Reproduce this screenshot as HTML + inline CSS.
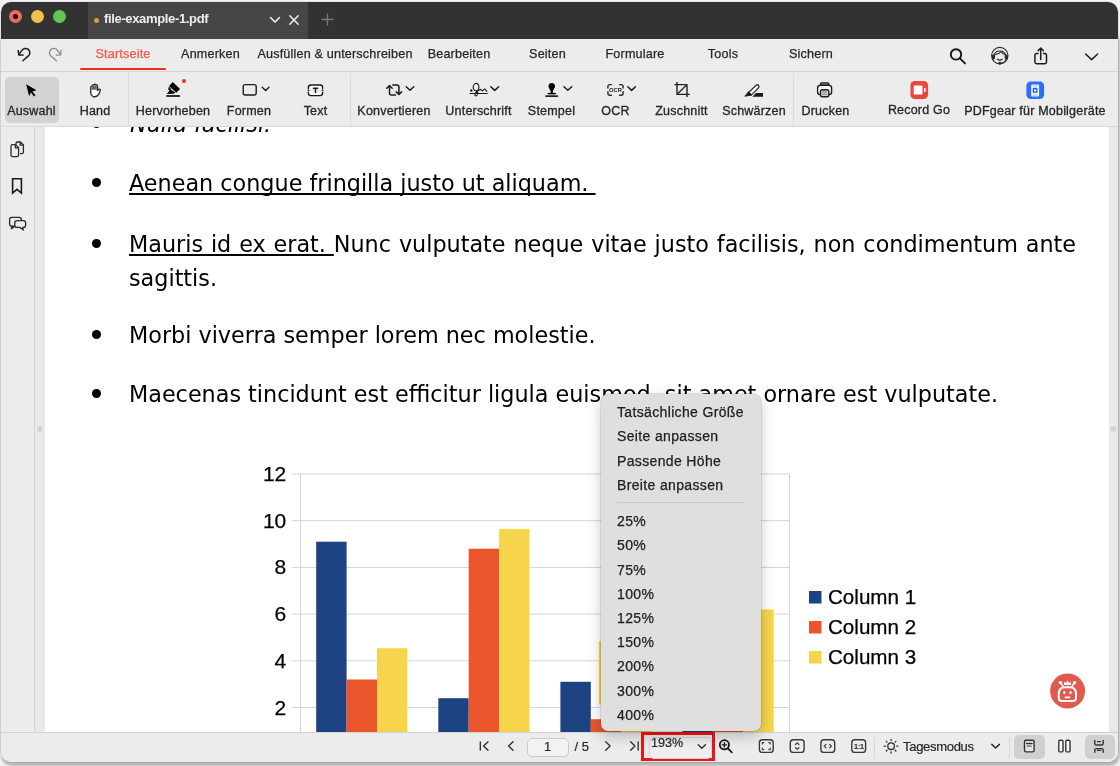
<!DOCTYPE html>
<html lang="de">
<head>
<meta charset="utf-8">
<title>file-example-1.pdf</title>
<style>
*{box-sizing:border-box;margin:0;padding:0}
html,body{width:1120px;height:766px;overflow:hidden}
body{background:#f3f3f3;font-family:"Liberation Sans",sans-serif;font-size:13px;color:#222;position:relative}
.abs{position:absolute}
#win{will-change:transform;position:absolute;left:1px;top:2px;width:1117px;height:760px;border-radius:10px;background:#ececec;overflow:hidden;box-shadow:0 0 0 .5px rgba(0,0,0,.13)}
#title{position:absolute;left:0;top:0;width:100%;height:37px;background:#323232}
#tab{position:absolute;left:87px;top:0;width:220px;height:37px;background:#464646}
.tl{position:absolute;top:8px;width:13px;height:13px;border-radius:50%}
#tabtxt{position:absolute;left:103px;top:9px;color:#ededed;font-weight:bold;font-size:13px;letter-spacing:-.35px;white-space:nowrap}
#menu{position:absolute;left:0;top:37px;width:100%;height:33px;background:#ececec;border-bottom:1px solid #d6d6d6}
.mi{position:absolute;top:8px;transform:translateX(-50%);white-space:nowrap;font-size:12.6px;letter-spacing:.18px;-webkit-text-stroke:.25px;color:#262626}
#tools{position:absolute;left:0;top:70px;width:100%;height:55px;background:#ececec;border-bottom:1px solid #d9d9d9}
.tb{position:absolute;top:31.8px;transform:translateX(-50%);white-space:nowrap;font-size:12.5px;letter-spacing:.2px;-webkit-text-stroke:.3px #262626;color:#262626}
.vs{position:absolute;top:1px;width:1px;height:54px;background:#dcdcdc}
svg{position:absolute;overflow:visible}
#side{position:absolute;left:0;top:125px;width:34px;height:605px;background:#ececec;border-right:1px solid #d4d4d4}
#doc{position:absolute;left:34px;top:125px;width:1083px;height:605px;background:#e9e9e9;overflow:hidden}
#page{position:absolute;left:10px;top:-10px;width:1064px;height:640px;background:#fff;font-family:"DejaVu Sans",sans-serif;font-size:22.3px;color:#000}
.ln{position:absolute;white-space:nowrap;line-height:26px;text-decoration-thickness:1.3px;text-underline-offset:2.2px;text-decoration-skip-ink:none}
.bul{position:absolute;width:9px;height:9px;border-radius:50%;background:#000;left:47px}
#bot{position:absolute;left:0;top:730px;width:100%;height:30px;background:#ececec;border-top:1px solid #d2d2d2}
#pop{position:absolute;left:600px;top:392px;width:160px;height:337px;border-radius:7px;background:#dfdfdf;box-shadow:0 0 0 .5px rgba(0,0,0,.18),0 5px 14px rgba(0,0,0,.22)}
.pi{position:absolute;left:16px;white-space:nowrap;font-size:14px;letter-spacing:.35px;-webkit-text-stroke:.25px;color:#202020;line-height:16px}
.bt{position:absolute;top:6px;white-space:nowrap;font-size:13px;-webkit-text-stroke:.2px;color:#262626}
.ax{font-family:"Liberation Sans",sans-serif;font-size:21px;fill:#000;stroke:#000;stroke-width:.25px}
</style>
</head>
<body>
<div class="abs" style="left:1.5px;top:30px;width:1116.5px;height:732px;border-radius:10px;box-shadow:.5px 3px 3px 1px rgba(0,0,0,.26)"></div>
<div id="win">
  <div id="title">
    <div id="tab"></div>
    <div class="tl" style="left:8px;background:#ec6a5e"></div>
    <div class="abs" style="left:12px;top:12px;width:5px;height:5px;border-radius:50%;background:#1a0000"></div>
    <div class="tl" style="left:30px;background:#f4bf4f"></div>
    <div class="tl" style="left:52px;background:#61c554"></div>
    <div class="abs" style="left:92.5px;top:16px;width:5px;height:5px;border-radius:50%;background:#e8953a"></div>
    <div id="tabtxt">file-example-1.pdf</div>
    <svg style="left:268px;top:14px" width="12" height="8" viewBox="0 0 12 8"><path d="M1.5 1.5 L6 6 L10.5 1.5" fill="none" stroke="#f0f0f0" stroke-width="1.6" stroke-linecap="round" stroke-linejoin="round"/></svg>
    <svg style="left:288px;top:13px" width="10" height="10" viewBox="0 0 10 10"><path d="M0.8 0.8 L9.2 9.2 M9.2 0.8 L0.8 9.2" fill="none" stroke="#f0f0f0" stroke-width="1.5" stroke-linecap="round"/></svg>
    <svg style="left:320px;top:11px" width="13" height="13" viewBox="0 0 13 13"><path d="M6.5 0.5 V12.5 M0.5 6.5 H12.5" fill="none" stroke="#7a7a7a" stroke-width="1.3"/></svg>
  </div>
  <div id="menu">
    <div class="mi" style="left:122px;color:#ee5a45">Startseite</div>
    <div class="abs" style="left:79px;top:29px;width:86px;height:2px;border-radius:1px;background:#e8321c"></div>
    <div class="mi" style="left:209.5px">Anmerken</div>
    <div class="mi" style="left:334px">Ausfüllen &amp; unterschreiben</div>
    <div class="mi" style="left:458px">Bearbeiten</div>
    <div class="mi" style="left:546.5px">Seiten</div>
    <div class="mi" style="left:634px">Formulare</div>
    <div class="mi" style="left:722px">Tools</div>
    <div class="mi" style="left:810px">Sichern</div>
  </div>
  <div id="tools">
    <div class="abs" style="left:3.5px;top:5px;width:54.5px;height:46px;border-radius:5px;background:#d2d2d2"></div>
    <div class="tb" style="left:30.5px">Auswahl</div>
    <div class="tb" style="left:94px">Hand</div>
    <div class="vs" style="left:127px"></div>
    <div class="tb" style="left:172px">Hervorheben</div>
    <div class="tb" style="left:248px">Formen</div>
    <div class="tb" style="left:314.5px">Text</div>
    <div class="vs" style="left:349px"></div>
    <div class="tb" style="left:393px">Konvertieren</div>
    <div class="tb" style="left:477.5px">Unterschrift</div>
    <div class="tb" style="left:550.5px">Stempel</div>
    <div class="tb" style="left:614.5px">OCR</div>
    <div class="tb" style="left:680.5px">Zuschnitt</div>
    <div class="tb" style="left:753px">Schwärzen</div>
    <div class="vs" style="left:792px"></div>
    <div class="tb" style="left:824.5px">Drucken</div>
    <div class="tb" style="left:918px;top:30.8px">Record Go</div>
    <div class="tb" style="left:1034px">PDFgear für Mobilgeräte</div>
  </div>
  <div id="side"></div>
  <div id="doc">
    <div id="page">
      <div class="bul" style="top:2px"></div>
      <div class="ln" style="left:85px;top:-6.3px;font-style:italic">Nulla facilisi.</div>
      <div class="bul" style="top:61.4px"></div>
      <div class="ln" style="left:84px;top:52.5px;text-decoration:underline">Aenean congue fringilla justo ut aliquam.&nbsp;</div>
      <div class="bul" style="top:122.2px"></div>
      <div class="ln" style="left:84px;top:114.3px;word-spacing:.8px"><span style="text-decoration:underline">Mauris id ex erat. </span>Nunc vulputate neque vitae justo facilisis, non condimentum ante</div>
      <div class="ln" style="left:84px;top:148px">sagittis.</div>
      <div class="bul" style="top:213.3px"></div>
      <div class="ln" style="left:84px;top:205px">Morbi viverra semper lorem nec molestie.</div>
      <div class="bul" style="top:272.2px"></div>
      <div class="ln" style="left:84px;top:264px">Maecenas tincidunt est efficitur ligula euismod, sit amet ornare est vulputate.</div>
    </div>
  </div>
<svg id="chart" style="left:-1px;top:-2px" width="1120" height="766" viewBox="0 0 1120 766">
<g stroke="#d4d4d4" stroke-width="1" fill="none">
<path d="M292 474.0 H789.5"/>
<path d="M292 520.7 H789.5"/>
<path d="M292 567.4 H789.5"/>
<path d="M292 614.1 H789.5"/>
<path d="M292 660.8 H789.5"/>
<path d="M292 707.5 H789.5"/>
<path d="M300.5 474 V740 M789.5 474 V740"/>
</g>
<rect x="316.2" y="541.7" width="30.4" height="198.3" fill="#1d4383"/>
<rect x="346.6" y="679.5" width="30.4" height="60.5" fill="#ea552c"/>
<rect x="377.0" y="648.2" width="30.4" height="91.8" fill="#f6d44c"/>
<rect x="438.3" y="698.2" width="30.4" height="41.8" fill="#1d4383"/>
<rect x="468.7" y="548.7" width="30.4" height="191.3" fill="#ea552c"/>
<rect x="499.1" y="528.9" width="30.4" height="211.1" fill="#f6d44c"/>
<rect x="560.4" y="681.8" width="30.4" height="58.2" fill="#1d4383"/>
<rect x="590.8" y="719.2" width="30.4" height="20.8" fill="#ea552c"/>
<rect x="621.2" y="667.8" width="30.4" height="72.2" fill="#f6d44c"/>
<rect x="682.5" y="653.8" width="30.4" height="86.2" fill="#1d4383"/>
<rect x="712.9" y="543.6" width="30.4" height="196.4" fill="#ea552c"/>
<rect x="743.3" y="609.4" width="30.4" height="130.6" fill="#f6d44c"/>
<rect x="598.8" y="641" width="2.4" height="63.5" fill="#f6d44c"/>
<g class="ax" text-anchor="end">
<text x="286.3" y="481.0">12</text>
<text x="286.3" y="527.7">10</text>
<text x="286.3" y="574.4">8</text>
<text x="286.3" y="621.1">6</text>
<text x="286.3" y="667.8">4</text>
<text x="286.3" y="714.5">2</text>
</g>
<rect x="809" y="591" width="12.5" height="12.5" fill="#1d4383"/>
<text class="ax" style="font-size:20.6px" x="828" y="604">Column 1</text>
<rect x="809" y="621" width="12.5" height="12.5" fill="#ea552c"/>
<text class="ax" style="font-size:20.6px" x="828" y="634">Column 2</text>
<rect x="809" y="651" width="12.5" height="12.5" fill="#f6d44c"/>
<text class="ax" style="font-size:20.6px" x="828" y="664">Column 3</text>
</svg>
<svg id="icons" style="left:-1px;top:-2px;pointer-events:none" width="1120" height="766" viewBox="0 0 1120 766" fill="none" stroke-linecap="round" stroke-linejoin="round">
<!-- undo / redo -->
<g stroke="#1c1c1c" stroke-width="1.5">
<path d="M22.9 60.7 L28.4 55.9 A4.3 4.3 0 1 0 21.9 50.4 L18.9 54.4"/>
<path d="M18.2 50.4 L18.7 54.9 L23 55.1"/>
</g>
<g stroke="#8a8a8a" stroke-width="1.3">
<path d="M56.4 60.7 L50.9 55.9 A4.3 4.3 0 1 1 57.4 50.4 L60.4 54.4"/>
<path d="M61.1 50.4 L60.6 54.9 L56.3 55.1"/>
</g>
<!-- menu right icons -->
<g stroke="#151515" stroke-width="1.9">
<circle cx="956" cy="54.4" r="5.2"/>
<path d="M959.9 58.4 L965 63.4"/>
</g>
<g stroke="#2a2a2a" stroke-width="1.1">
<circle cx="999.8" cy="55.6" r="8.2"/>
<path d="M993.6 56.5 A6.3 6.6 0 0 1 1006 56.5"/>
<path d="M994.6 54.8 Q998.5 54.6 1001.2 51.6 Q1002.8 54.4 1005.2 54.8"/>
<path d="M997.4 59.2 Q999.8 61 1002.2 59.2"/>
<rect x="992.4" y="55" width="2" height="4" rx="1" fill="#2a2a2a"/>
<rect x="1005.2" y="55" width="2" height="4" rx="1" fill="#2a2a2a"/>
<path d="M1006.2 59 Q1005.6 62.6 1000.6 63.2"/>
<circle cx="999.8" cy="63.2" r="1" fill="#2a2a2a"/>
</g>
<g stroke="#1c1c1c" stroke-width="1.5">
<path d="M1038 53.6 H1036.6 Q1034.9 53.6 1034.9 55.3 V62 Q1034.9 63.7 1036.6 63.7 H1044.8 Q1046.5 63.7 1046.5 62 V55.3 Q1046.5 53.6 1044.8 53.6 H1043.4"/>
<path d="M1040.7 59.4 V48.4 M1038 50.8 L1040.7 48.1 L1043.4 50.8"/>
<path d="M1085.6 54 L1091.6 59.6 L1097.6 54"/>
</g>
<!-- cursor -->
<path d="M26.2 84.3 L36.5 90.3 L32.4 91.4 L35.5 95.3 L34 96.5 L30.9 92.6 L29.1 96.2 Z" fill="#000" stroke="none"/>
<!-- hand -->
<g stroke="#2a2a2a" stroke-width="1.3">
<path d="M90.7 87.8 Q90.7 86.3 92 85.9 Q92.8 84.2 94.1 84.7 Q95.1 83.6 96.1 84.7 Q97.5 84.6 97.5 86.2 V90.6 L99 89.3 Q100.5 88.7 100.3 90.3 Q99.4 94.2 97.3 95.9 Q95 97.4 92.8 96.3 Q90.7 95.1 90.7 92.4 Z" fill="#fff"/>
<path d="M91.4 87.8 Q91.4 86.6 92.4 86.3 Q93.1 84.9 94.2 85.4 Q95.1 84.5 96 85.4 Q96.9 85.3 96.9 86.4 V89.8 H91.4 Z" fill="#666" stroke="none"/>
</g>
<!-- highlighter -->
<g fill="#000" stroke="none">
<path d="M172.8 82.1 L180 89 L176.3 92.8 L169.1 85.9 Z"/>
<path d="M168.9 86.6 L175.4 92.8 L173.4 93.8 L166.7 93.9 L169.5 90.7 L168.2 89.4 Z"/>
<rect x="166.3" y="95.2" width="13.6" height="1.6"/>
</g>
<path d="M170.8 89 L172.9 91.1" stroke="#ececec" stroke-width="1"/>
<circle cx="184" cy="81.1" r="2.1" fill="#ee3b2c"/>
<!-- formen -->
<g stroke="#1c1c1c" stroke-width="1.4">
<rect x="243.2" y="84.6" width="13" height="10.4" rx="2"/>
<path d="M262.2 87.2 L265.6 90.4 L269 87.2"/>
</g>
<!-- text -->
<g stroke="#1c1c1c" stroke-width="1.4">
<path d="M308.4 88.4 V87.6 Q308.4 85 311 85 H320 Q322.6 85 322.6 87.6 V88.4 M322.6 92.2 V93 Q322.6 95.6 320 95.6 H311 Q308.4 95.6 308.4 93 V92.2" fill="#fff"/>
<path d="M308.2 90.3 H308.8 M322.2 90.3 H322.8"/>
<path d="M313.4 88.3 H317.6 M315.5 88.3 V92.5" stroke-width="1.5"/>
</g>
<!-- konvertieren -->
<g stroke="#1c1c1c" stroke-width="1.5">
<path d="M395.4 95 H391.5 Q389.5 95 389.5 93 V86"/>
<path d="M386.8 88.2 L389.5 85.6 L392.2 88.2"/>
<path d="M392.8 85 H396.9 Q398.9 85 398.9 87 V94"/>
<path d="M396.2 91.9 L398.9 94.5 L401.6 91.9"/>
<path d="M406.2 86.8 L410 90.3 L413.8 86.8"/>
</g>
<!-- unterschrift -->
<g stroke="#1c1c1c" stroke-width="1.1">
<path d="M470 93.5 H487.2"/>
<circle cx="471.3" cy="90.6" r="0.7" fill="#1c1c1c"/>
<path d="M477.6 90.8 Q479.6 88.4 478.8 85.4 Q477.6 82.6 475.2 83.6 Q472.6 85.2 473.4 88.6 Q474.6 91.6 477.2 90.6 Q478.4 93 477.2 95 Q475.8 96.6 474.8 95.2 Q474.6 93.4 477 91.4 L480.6 89.2 L482.2 91 L484.8 88.8 L486.8 91.4"/>
<path d="M490.8 86.8 L494.7 90.4 L498.6 86.8" stroke-width="1.5"/>
</g>
<!-- stempel -->
<g fill="#000" stroke="none">
<path d="M551.75 82.9 C554.2 82.9 555.2 84.8 555 86.6 C554.8 88.4 553.2 89.8 552.8 91.4 L552.8 93 H550.7 L550.7 91.4 C550.3 89.8 548.7 88.4 548.5 86.6 C548.3 84.8 549.3 82.9 551.75 82.9 Z"/>
<rect x="547.6" y="92.9" width="8.4" height="1.1"/>
<rect x="548.2" y="94" width="7.2" height="1.4" fill="#9a9a9a"/>
<rect x="545.3" y="95.3" width="12.8" height="1.7" fill="#222"/>
</g>
<path d="M564 86.8 L567.8 90.3 L571.7 86.8" stroke="#1c1c1c" stroke-width="1.5"/>
<!-- OCR -->
<g stroke="#2a2a2a" stroke-width="1.4">
<path d="M607.9 88 V86.6 Q607.9 84.6 609.9 84.6 H611.4"/>
<path d="M619.6 84.6 H621.1 Q623.1 84.6 623.1 86.6 V88"/>
<path d="M623.1 91.8 V93.2 Q623.1 95.2 621.1 95.2 H619.6"/>
<path d="M611.4 95.2 H609.9 Q607.9 95.2 607.9 93.2 V91.8"/>
<path d="M627.8 86.8 L631.6 90.4 L635.4 86.8" stroke="#1c1c1c" stroke-width="1.5"/>
</g>
<text x="615.5" y="92" text-anchor="middle" font-family="Liberation Sans, sans-serif" font-weight="bold" font-size="5.8" fill="#222" stroke="none">OCR</text>
<!-- crop -->
<g stroke="#222" stroke-width="1.4" stroke-linecap="butt">
<path d="M677 81.9 V94.4 H689.7"/>
<path d="M674.4 84.6 H687 V97"/>
<path d="M677.6 93.8 L686.4 85.2" stroke-width="1.3"/>
</g>
<!-- schwaerzen -->
<g>
<path d="M748.8 92.2 L756.2 85.2 Q757.6 84 758.6 85.4 Q759.6 86.8 758.4 88 L751.2 95.2 Z" stroke="#2a2a2a" stroke-width="1.2" fill="#fff"/>
<path d="M748.6 92 L751.6 95 L745.2 96.2 Z" fill="#111" stroke="#111" stroke-width="0.8"/>
<path d="M756 93 H763 V96.8 H752.4 Z" fill="#1a1a1a" stroke="none"/>
</g>
<!-- drucken -->
<g stroke="#1c1c1c" stroke-width="1.4">
<rect x="817.6" y="85.4" width="14" height="9.2" rx="2.6" fill="#f8f8f8"/>
<path d="M820.4 85.2 V84.4 Q820.4 82.9 821.9 82.9 H827.4 Q828.9 82.9 828.9 84.4 V85.2 Z" fill="#888"/>
<rect x="820.5" y="89.8" width="8.3" height="6.9" rx="1.8" fill="#d8d8d8"/>
<path d="M822.6 92 H826.6 M822.6 94.2 H826.6" stroke="#777" stroke-width="1"/>
</g>
<!-- record go -->
<rect x="910.4" y="81" width="17.7" height="18" rx="4.4" fill="#e6493c" stroke="none"/>
<rect x="913.7" y="85.5" width="8.8" height="9.1" rx="1.2" fill="#fff" stroke="none"/>
<rect x="924" y="88" width="1.8" height="3.8" rx="0.5" fill="#fff" stroke="none"/>
<!-- pdfgear mobile -->
<rect x="1026.4" y="81.5" width="17.7" height="17.5" rx="4.2" fill="#2f6ef6" stroke="none"/>
<rect x="1031.2" y="84.4" width="7.9" height="12.1" rx="1.2" fill="#f4f8ff" stroke="none"/>
<rect x="1032.8" y="87.8" width="4.7" height="5" fill="#1f5bf0" stroke="none"/>
<circle cx="1035.2" cy="90.4" r="1.2" fill="#fff" stroke="none"/>
<path d="M1033 85.9 H1037.3 M1033 95 H1037.3" stroke="#9bbcfb" stroke-width="0.9"/>
<!-- sidebar -->
<g stroke="#2a2a2a" stroke-width="1.3">
<path d="M16 144.2 V143.6 Q16 142 17.6 142 H20.4 L23.4 145 V152 Q23.4 153.6 21.8 153.6 H20.6"/>
<path d="M20.2 142.2 V145.2 H23.2"/>
<path d="M11 146.2 Q11 144.6 12.6 144.6 H15.6 L18.6 147.6 V155 Q18.6 156.6 17 156.6 H12.6 Q11 156.6 11 155 Z" fill="#ececec"/>
<path d="M15.4 144.8 V147.8 H18.4"/>
</g>
<path d="M12.6 178.8 H21.4 V193 L17 189.4 L12.6 193 Z" stroke="#1c1c1c" stroke-width="1.6" stroke-linejoin="miter"/>
<g stroke="#2a2a2a" stroke-width="1.3">
<path d="M14 226.2 H11.8 Q9.6 226.2 9.6 224 V219.6 Q9.6 217.4 11.8 217.4 H19.2 Q21.4 217.4 21.4 219.6 V220.4"/>
<path d="M12.2 226.2 L11.4 228.8 L14.6 226.4"/>
<path d="M17 220.6 H23.4 Q25.6 220.6 25.6 222.8 V225.2 Q25.6 227.4 23.4 227.4 H22.6 L23.4 230 L19.8 227.4 H17 Q14.8 227.4 14.8 225.2 V222.8 Q14.8 220.6 17 220.6 Z" fill="#ececec"/>
</g>
<!-- splitter dots -->
<circle cx="40" cy="429" r="2.8" fill="#d2d2d2"/>
<circle cx="1113.5" cy="429" r="2.8" fill="#d2d2d2"/>
<!-- AI bot -->
<circle cx="1067.6" cy="691" r="17.5" fill="#e15a50"/>
<g stroke="#fff" stroke-width="2" fill="none">
<path d="M1058.8 694 Q1058.8 687.2 1065 687.2 H1070 Q1076 687.2 1076 694 V698 Q1076 700.9 1073 700.9 H1061.8 Q1058.8 700.9 1058.8 698 Z"/>
<path d="M1060.6 682.8 L1063 686.4 M1074.4 682.8 L1072 686.4" stroke-width="1.6"/>
</g>
<g fill="#fff" stroke="none">
<circle cx="1060.4" cy="682.6" r="1.7"/><circle cx="1074.6" cy="682.6" r="1.7"/>
<path d="M1063.8 685 L1064.6 681.4 L1066.2 683 L1067.5 680.2 L1068.8 683 L1070.4 681.4 L1071.2 685 Z"/>
<rect x="1063.4" y="691" width="2" height="3.2" rx="1"/><rect x="1069.5" y="691" width="2" height="3.2" rx="1"/>
<rect x="1064.6" y="696.6" width="5.8" height="1.6" rx="0.8"/>
</g>
</svg>
  <div id="bot">
    <div class="abs" style="left:526px;top:5px;width:42px;height:19px;border:1px solid #cbc8d0;border-radius:5px;background:#f2f2f2"></div>
    <div class="bt" style="left:543px">1</div>
    <div class="bt" style="left:573.5px">/ 5</div>
    <div class="abs" style="left:640px;top:-1px;width:74px;height:29px;border:3px solid #f01414"></div>
    <div class="abs" style="left:647.5px;top:4px;width:63px;height:22px;border:1px solid #d4d2d8;border-radius:5px;background:#efefef"></div>
    <div class="bt" style="left:650px;top:3px;font-size:12.6px">193%</div>
    <div class="bt" style="left:902px;letter-spacing:-.3px">Tagesmodus</div>
    <div class="abs" style="left:873px;top:4px;width:1px;height:22px;background:#d8d8d8"></div>
    <div class="abs" style="left:1007.5px;top:4px;width:1px;height:22px;background:#d8d8d8"></div>
    <div class="abs" style="left:1013px;top:2px;width:30.5px;height:24px;border-radius:5px;background:#d0d0d0"></div>
    <div class="abs" style="left:1083.5px;top:2px;width:30.5px;height:24px;border-radius:5px;background:#d0d0d0"></div>
  </div>
<svg id="bicons" style="left:-1px;top:-2px;pointer-events:none" width="1120" height="766" viewBox="0 0 1120 766" fill="none" stroke-linecap="round" stroke-linejoin="round">
<g stroke="#2a2a2a" stroke-width="1.3">
<path d="M480.3 741.8 V750.2 M488 741.8 L483.6 746 L488 750.2"/>
<path d="M513 741.8 L508.6 746 L513 750.2"/>
<path d="M605.7 741.8 L610.1 746 L605.7 750.2"/>
<path d="M630.6 741.8 L635 746 L630.6 750.2 M638.2 741.8 V750.2"/>
<path d="M698.2 744.8 L701.8 748.2 L705.4 744.8"/>
</g>
<g stroke="#1a1a1a" stroke-width="1.8">
<circle cx="724.4" cy="744.8" r="4.6"/>
<path d="M727.9 748.4 L731.8 752.4"/>
<path d="M722.2 744.8 H726.6 M724.4 742.6 V747" stroke-width="1.3"/>
</g>
<g stroke="#3a3a3a" stroke-width="1.4">
<rect x="759.4" y="739.8" width="13.8" height="12.6" rx="3"/>
<path d="M762.4 744 V742.6 H763.8 M768.8 742.6 H770.2 V744 M770.2 748.2 V749.6 H768.8 M763.8 749.6 H762.4 V748.2" stroke-width="1.2"/>
<rect x="790.3" y="739.8" width="13.8" height="12.6" rx="3"/>
<path d="M795.4 744.6 L797.2 742.8 L799 744.6 M795.4 747.6 L797.2 749.4 L799 747.6" stroke-width="1.2"/>
<rect x="820.9" y="739.8" width="13.8" height="12.6" rx="3"/>
<path d="M826 744.3 L824.2 746.1 L826 747.9 M829.6 744.3 L831.4 746.1 L829.6 747.9" stroke-width="1.2"/>
<rect x="851.8" y="739.8" width="13.8" height="12.6" rx="3"/>
</g>
<text x="858.7" y="749" text-anchor="middle" font-family="Liberation Sans, sans-serif" font-weight="bold" font-size="8" letter-spacing="-0.6" fill="#2a2a2a" stroke="none">1:1</text>
<g stroke="#2a2a2a" stroke-width="1.3">
<circle cx="891.1" cy="746.2" r="3.3"/>
<path d="M891.1 739.4 V740.4 M891.1 752 V753 M884.3 746.2 H885.3 M896.9 746.2 H897.9 M886.3 741.4 L887 742.1 M895.2 750.3 L895.9 751 M886.3 751 L887 750.3 M895.2 742.1 L895.9 741.4"/>
<path d="M991.8 744.4 L995.6 748 L999.4 744.4" stroke-width="1.5"/>
</g>
<g stroke="#333" stroke-width="1.4">
<rect x="1024.5" y="740.3" width="9.6" height="11.6" rx="1.6" fill="#e4e4e4"/>
<path d="M1026.6 743.4 H1032" stroke-width="1.5"/>
<path d="M1027.4 746.2 H1031.2" stroke="#666" stroke-width="1.2"/>
<rect x="1058.8" y="740.3" width="4.2" height="11.6" rx="1.2" fill="#fff"/>
<rect x="1065.8" y="740.3" width="4.2" height="11.6" rx="1.2" fill="#fff"/>
<path d="M1094.8 740.4 V743.4 Q1094.8 745 1096.4 745 H1101.6 Q1103.2 745 1103.2 743.4 V740.4"/>
<path d="M1097.4 741.6 H1100.6 M1097.4 750.4 H1100.6" stroke-width="1.2"/>
<path d="M1094.8 752.2 V750.2 Q1094.8 748.6 1096.4 748.6 H1101.6 Q1103.2 748.6 1103.2 750.2 V752.2"/>
</g>
</svg>
  <div id="pop">
    <div class="pi" style="top:10.25px">Tatsächliche Größe</div>
    <div class="pi" style="top:34.45px">Seite anpassen</div>
    <div class="pi" style="top:58.65px">Passende Höhe</div>
    <div class="pi" style="top:82.85px">Breite anpassen</div>
    <div class="abs" style="left:16px;top:108px;width:128px;height:1px;background:#cbcbcb"></div>
    <div class="pi" style="top:119.15px">25%</div>
    <div class="pi" style="top:143.35px">50%</div>
    <div class="pi" style="top:167.55px">75%</div>
    <div class="pi" style="top:191.75px">100%</div>
    <div class="pi" style="top:215.95px">125%</div>
    <div class="pi" style="top:240.15px">150%</div>
    <div class="pi" style="top:264.35px">200%</div>
    <div class="pi" style="top:288.55px">300%</div>
    <div class="pi" style="top:312.75px">400%</div>
  </div>
</div>
</body>
</html>
